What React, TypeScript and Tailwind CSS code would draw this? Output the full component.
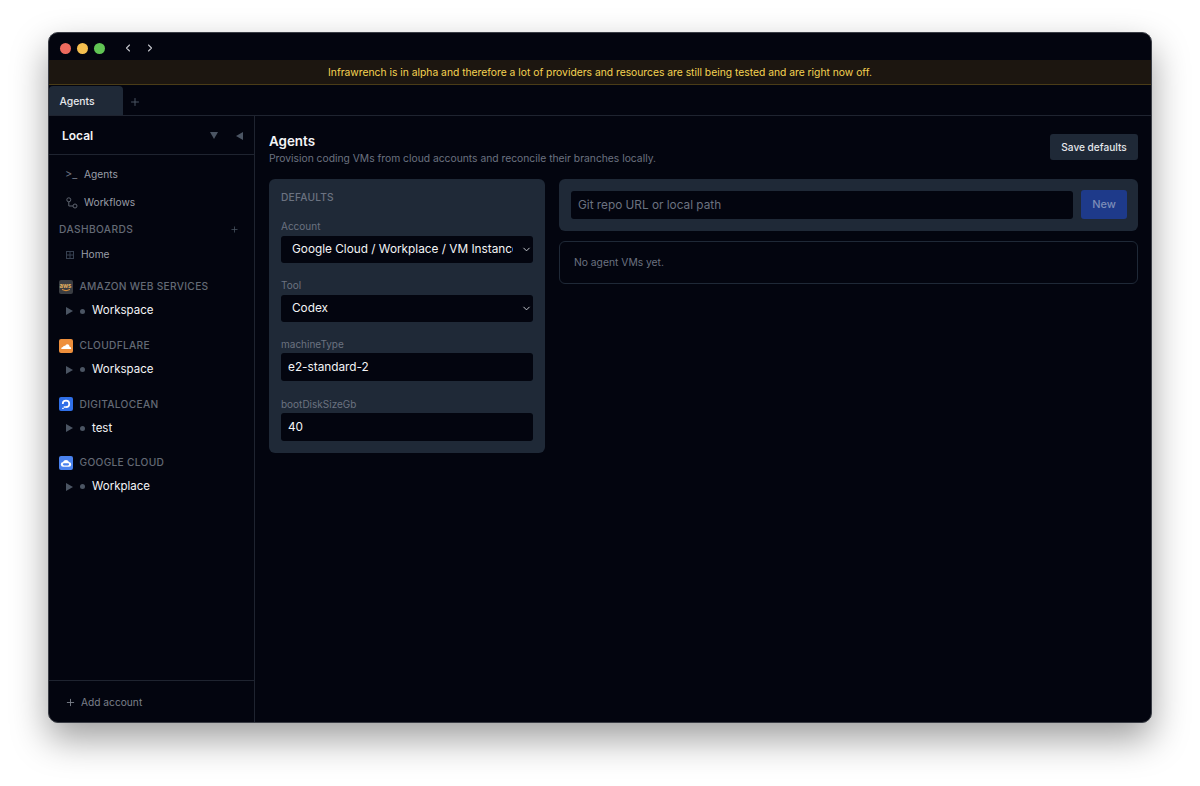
import { ChevronDown, ChevronLeft, ChevronRight, Plus } from "lucide-react";
import type { ReactNode } from "react";

const font = { fontFamily: "Inter, 'Liberation Sans', sans-serif" };

function AwsLogo() {
  return (
    <div className="flex h-[14px] w-[14px] flex-col items-center justify-center rounded-[2px] bg-[#3a3d42]">
      <span className="text-[6px] font-bold leading-[6px] text-[#e0b060]">aws</span>
      <svg width="10" height="3" viewBox="0 0 10 3">
        <path d="M1 0.5 Q5 3 9 0.5" stroke="#e8973a" strokeWidth="1" fill="none" />
      </svg>
    </div>
  );
}

function CloudflareLogo() {
  return (
    <svg width="14" height="14" viewBox="0 0 14 14">
      <rect width="14" height="14" rx="2" fill="#ee8f3c" />
      <path d="M2.2 10 Q2.2 8 4 8 Q4.6 6.6 6 6.9 Q7.2 4.4 9.4 5.6 Q10.4 6.2 10.4 7.4 Q12.2 7.6 12.2 10 Z" fill="#fff" />
    </svg>
  );
}

function DoLogo() {
  return (
    <svg width="14" height="14" viewBox="0 0 14 14">
      <rect width="14" height="14" rx="2" fill="#2f6fe8" />
      <path d="M7 11 V9.3 A2.4 2.4 0 1 0 4.6 6.9 H2.9 A4.1 4.1 0 1 1 7 11 Z" fill="#fff" />
      <rect x="4.7" y="9.3" width="2.3" height="1.5" fill="#fff" />
      <rect x="3.2" y="10.8" width="1.5" height="1.2" fill="#fff" />
    </svg>
  );
}

function GcpLogo() {
  return (
    <svg width="14" height="14" viewBox="0 0 14 14">
      <rect width="14" height="14" rx="2" fill="#4a82ee" />
      <path d="M4.4 10.8 A2.4 2.4 0 0 1 4 6 A3.2 3.2 0 0 1 10 6 A2.4 2.4 0 0 1 9.6 10.8 Z" fill="#fff" />
      <path d="M5 9.4 A1.1 1.1 0 0 1 5 7.2 H9 A1.1 1.1 0 0 1 9 9.4 Z" fill="#4a82ee" />
    </svg>
  );
}

function ProviderGroup({ logo, name, item }: { logo: ReactNode; name: string; item: string }) {
  return (
    <div className="mb-[10.6px]">
      <div className="flex h-[20px] items-center gap-[7px] pl-[9.5px] pt-[2px]">
        {logo}
        <span className="text-[10.2px] font-medium tracking-[0.3px] text-[#646a75]">{name}</span>
      </div>
      <div className="mt-[2px] flex h-[26px] items-center pl-[17px]">
        <span className="h-0 w-0 border-y-[4px] border-l-[7px] border-y-transparent border-l-[#4b5563]" />
        <span className="ml-[7px] h-[5px] w-[5px] rounded-full bg-[#4b5563]" />
        <span className="ml-[7px] text-[11.5px] text-[#f3f4f6]">{item}</span>
      </div>
    </div>
  );
}

function Field({ label, children }: { label: string; children: ReactNode }) {
  return (
    <div>
      <div className="mb-[2px] text-[10px] leading-[15px] text-[#6b7280]">{label}</div>
      {children}
    </div>
  );
}

function SelectBox({ value }: { value: string }) {
  return (
    <div className="flex h-[27px] items-center rounded-[3px] bg-[#03050f] pl-[11px] pr-[1.5px] text-[11.8px] text-[#f3f4f6]">
      <span className="flex-1 overflow-hidden whitespace-nowrap">{value}</span>
      <ChevronDown size={11} strokeWidth={2} className="ml-[7.5px] shrink-0 text-[#d1d5db]" />
    </div>
  );
}

function TextBox({ value }: { value: string }) {
  return (
    <input
      readOnly
      value={value}
      className="-mt-[1px] mb-[1px] block h-[28px] w-full rounded-[3px] bg-[#03050f] px-[7px] text-[11.8px] text-[#f3f4f6] outline-none"
    />
  );
}

export default function App() {
  return (
    <div className="h-[786px] w-[1200px] overflow-hidden bg-white px-[48px] pt-[32px]" style={font}>
      <div className="flex h-[691px] flex-col overflow-hidden rounded-[10px] border border-[#3a3d45] bg-[#03050f] shadow-[0_16px_36px_rgba(0,0,0,0.38)]">
        {/* 标题栏 */}
        <div className="flex h-[27px] shrink-0 items-center pl-[11px] pt-[3px]">
          <span className="h-[11px] w-[11px] rounded-full bg-[#ed6a5e]" />
          <span className="ml-[6px] h-[11px] w-[11px] rounded-full bg-[#f4bf4f]" />
          <span className="ml-[6px] h-[11px] w-[11px] rounded-full bg-[#61c554]" />
          <ChevronLeft size={12} strokeWidth={2.2} className="ml-[17px] text-[#c5c7cc]" />
          <ChevronRight size={12} strokeWidth={2.2} className="ml-[10px] text-[#c5c7cc]" />
        </div>

        {/* alpha 提示 */}
        <div className="flex h-[25px] shrink-0 items-center justify-center border-b border-[#4a3c17] bg-[#1c1610] pt-[1px] text-[10.3px] text-[#f5d352]">
          Infrawrench is in alpha and therefore a lot of providers and resources are still being tested and are right now off.
        </div>

        {/* 标签栏 */}
        <div className="flex h-[31px] shrink-0 items-end border-b border-[#1f2430]">
          <div className="flex h-[29px] w-[74px] items-center rounded-t-[4px] bg-[#1f2937] pl-[10.5px] pt-[3px] text-[10.4px] font-medium text-[#e5e7eb]">
            Agents
          </div>
          <div className="flex h-[29px] items-center pl-[6px] pt-[2px]">
            <Plus size={12} className="text-[#4b5563]" />
          </div>
        </div>

        <div className="flex min-h-0 flex-1">
          {/* 侧边栏 */}
          <aside className="flex w-[206px] shrink-0 flex-col border-r border-[#1f2430]">
            <div className="flex h-[39px] shrink-0 items-center border-b border-[#1f2430] pl-[13px] pr-[11px] pt-[1px]">
              <span className="flex-1 text-[12px] font-semibold text-[#f3f4f6]">Local</span>
              <span className="h-0 w-0 border-x-[4px] border-t-[7px] border-x-transparent border-t-[#4b5563]" />
              <span className="ml-[18px] h-0 w-0 border-y-[4px] border-r-[7px] border-y-transparent border-r-[#4b5563]" />
            </div>

            <div className="flex-1 pt-[6px]">
              <div className="flex h-[27px] items-center pl-[16px] text-[10.2px] text-[#9a9ea8]">
                <span className="w-[19px] text-[11px] text-[#6b7280]">&gt;_</span>
                Agents
              </div>
              <div className="flex h-[28px] items-center pl-[17px] pt-[2px] text-[10.2px] text-[#9a9ea8]">
                <svg width="12" height="12" viewBox="0 0 12 12" fill="none" stroke="#5f6570" strokeWidth="1" className="mr-[6px]">
                  <circle cx="2.8" cy="2.8" r="2" />
                  <circle cx="9" cy="9" r="2" />
                  <path d="M2.8 4.8 V9 H7" />
                </svg>
                Workflows
              </div>
              <div className="flex h-[27px] items-center justify-between pl-[10px] pr-[15px] text-[10.2px] font-medium tracking-[0.4px] text-[#646a75]">
                DASHBOARDS
                <Plus size={9} className="text-[#4b5563]" />
              </div>
              <div className="mb-[11px] flex h-[22px] items-center pl-[17px] pt-[2px] text-[10.2px] text-[#9a9ea8]">
                <svg width="8" height="8" viewBox="0 0 8 8" fill="none" stroke="#374151" strokeWidth="1" className="mr-[7px]">
                  <rect x="0.5" y="0.5" width="7" height="7" />
                  <path d="M4 0.5 V7.5 M0.5 4 H7.5" />
                </svg>
                Home
              </div>
              <ProviderGroup logo={<AwsLogo />} name="AMAZON WEB SERVICES" item="Workspace" />
              <ProviderGroup logo={<CloudflareLogo />} name="CLOUDFLARE" item="Workspace" />
              <ProviderGroup logo={<DoLogo />} name="DIGITALOCEAN" item="test" />
              <ProviderGroup logo={<GcpLogo />} name="GOOGLE CLOUD" item="Workplace" />
            </div>

            <div className="flex h-[42px] shrink-0 items-center border-t border-[#1f2430] pl-[16px] pt-[2px] text-[10.2px] text-[#7b808a]">
              <Plus size={11} className="mr-[5px]" />
              Add account
            </div>
          </aside>

          {/* 主内容 */}
          <main className="min-w-0 flex-1 pl-[14px] pr-[13px] pt-[17px]">
            <div className="flex items-start justify-between">
              <div>
                <h1 className="text-[13.4px] font-semibold leading-[17px] text-[#f3f4f6]">Agents</h1>
                <p className="mt-[1px] text-[10.3px] leading-[14px] text-[#6b7280]">
                  Provision coding VMs from cloud accounts and reconcile their branches locally.
                </p>
              </div>
              <button className="mt-[1px] h-[26px] w-[88px] rounded-[3px] bg-[#1f2937] pt-[1px] text-[10.1px] font-medium text-[#e5e7eb]">
                Save defaults
              </button>
            </div>

            <div className="mt-[14px] flex items-start gap-[14px]">
              <section className="flex w-[276px] shrink-0 flex-col gap-[15px] rounded-[6px] bg-[#1f2937] px-[12px] pb-[11px] pt-[12px]">
                <div className="text-[10.2px] font-medium leading-[13px] tracking-[0.2px] text-[#6b7280]">DEFAULTS</div>
                <Field label="Account">
                  <SelectBox value="Google Cloud / Workplace / VM Instance" />
                </Field>
                <Field label="Tool">
                  <SelectBox value="Codex" />
                </Field>
                <Field label="machineType">
                  <TextBox value="e2-standard-2" />
                </Field>
                <Field label="bootDiskSizeGb">
                  <TextBox value="40" />
                </Field>
              </section>

              <div className="min-w-0 flex-1">
                <div className="flex items-center gap-[8px] rounded-[6px] bg-[#1f2937] pb-[12px] pl-[12px] pr-[11px] pt-[11px]">
                  <input
                    readOnly
                    placeholder="Git repo URL or local path"
                    className="h-[28px] min-w-0 flex-1 rounded-[3px] bg-[#03050f] px-[7px] text-[11.8px] text-[#f3f4f6] outline-none placeholder:text-[#6b7280]"
                  />
                  <button className="h-[29px] w-[46px] rounded-[3px] bg-[#1e3a8a] text-[11px] font-medium text-[#7c8db8]">
                    New
                  </button>
                </div>
                <div className="mt-[10px] flex h-[43px] items-center rounded-[6px] border border-[#1f2937] pl-[14px] text-[10.3px] text-[#6b7280]">
                  No agent VMs yet.
                </div>
              </div>
            </div>
          </main>
        </div>
      </div>
    </div>
  );
}
